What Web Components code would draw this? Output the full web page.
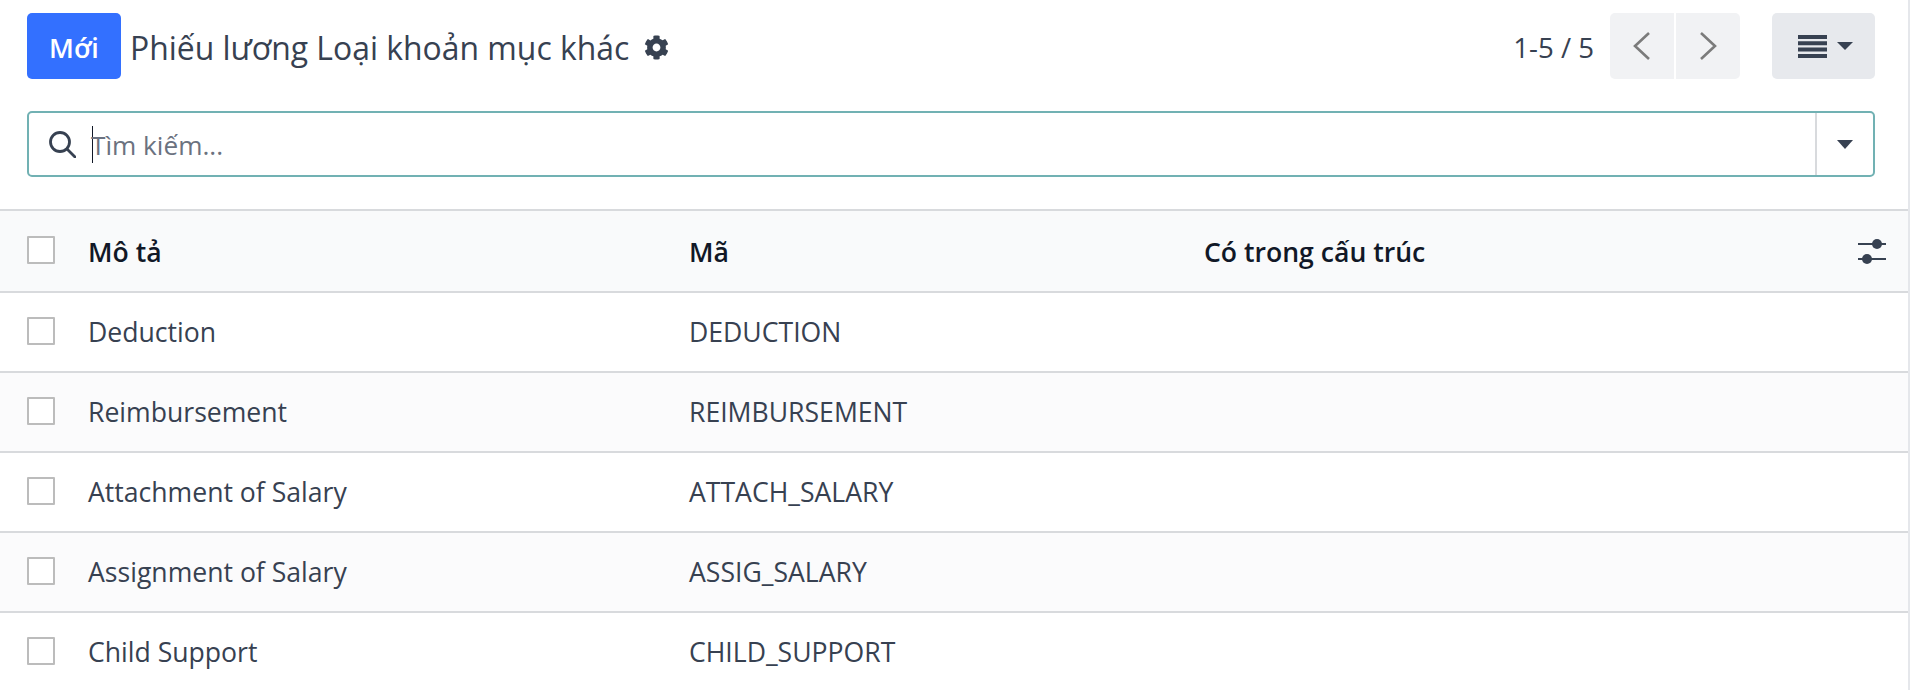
<!DOCTYPE html>
<html lang="vi">
<head>
<meta charset="utf-8">
<title>Phiếu lương Loại khoản mục khác</title>
<style>
    html, body { margin: 0; padding: 0; background: #fff; }
    body { font-family: "Open Sans", "Noto Sans", sans-serif; font-size: 26.6px; color: #374151; overflow: hidden; }
</style>
</head>
<body>
<app-page>
    <control-panel></control-panel>
    <search-bar></search-bar>
    <list-table>
        <list-row header name="Mô tả" code="Mã" extra="Có trong cấu trúc"></list-row>
        <list-row name="Deduction" code="DEDUCTION"></list-row>
        <list-row striped name="Reimbursement" code="REIMBURSEMENT"></list-row>
        <list-row name="Attachment of Salary" code="ATTACH_SALARY"></list-row>
        <list-row striped name="Assignment of Salary" code="ASSIG_SALARY"></list-row>
        <list-row name="Child Support" code="CHILD_SUPPORT"></list-row>
    </list-table>
</app-page>

<script>
class AppPage extends HTMLElement {
    constructor() {
        super();
        this.attachShadow({ mode: 'open' });
        this.shadowRoot.innerHTML = `
            <style>
                :host { display: block; width: 1908px; height: 690px; border-right: 2px solid #e5e7eb; box-sizing: content-box; overflow: hidden; }
            </style>
            <slot></slot>
        `;
    }
}

class ControlPanel extends HTMLElement {
    constructor() {
        super();
        this.attachShadow({ mode: 'open' });
        this.shadowRoot.innerHTML = `
            <style>
                :host { display: flex; align-items: stretch; height: 66px; padding: 13px 33px 0 27px; }
                button { font: inherit; border: 0; margin: 0; padding: 0; }
                .new { width: 94px; padding-top: 2px; border-radius: 5px; background: #3370ff; color: #fff; font-weight: 600; font-size: 27px; }
                .title { display: flex; align-items: center; margin-left: 9px; padding-top: 2px; font-size: 31.9px; color: #374151; white-space: nowrap; }
                .title svg { width: 25px; height: 25px; margin-left: 15px; fill: #374151; }
                .right { margin-left: auto; display: flex; align-items: stretch; }
                .count { align-self: center; padding-top: 2px; font-size: 27.6px; margin-right: 16px; }
                .pager { display: flex; gap: 2px; width: 130px; }
                .pager button { flex: 1; background: #f1f2f4; display: flex; align-items: center; justify-content: center; }
                .pager button:first-child { border-radius: 5px 0 0 5px; }
                .pager button:last-child { border-radius: 0 5px 5px 0; }
                .pager svg { width: 18px; height: 30px; fill: none; stroke: #7b7b7b; stroke-width: 2.6; }
                .view { margin-left: 32px; width: 103px; padding-left: 3px; box-sizing: border-box; border-radius: 5px; background: #e7e9ed; display: flex; align-items: center; justify-content: center; gap: 10px; }
                .view .bars { width: 29px; height: 23px; fill: #374151; }
                .view .caret { width: 16px; height: 8px; fill: #374151; }
            </style>
            <button class="new">Mới</button>
            <div class="title">Phiếu lương Loại khoản mục khác
                <svg viewBox="0 0 512 512"><path d="M487.4 315.7l-42.6-24.6c4.3-23.2 4.3-47 0-70.2l42.6-24.6c4.9-2.8 7.1-8.6 5.5-14-11.1-35.6-30-67.8-54.7-94.6-3.8-4.1-10-5.1-14.8-2.3L380.8 110c-17.9-15.4-38.5-27.3-60.8-35.1V25.8c0-5.6-3.9-10.5-9.4-11.7-36.7-8.2-74.3-7.8-109.2 0-5.5 1.2-9.4 6.1-9.4 11.7V75c-22.2 7.9-42.8 19.8-60.8 35.1L88.7 85.5c-4.9-2.8-11-1.9-14.8 2.3-24.7 26.7-43.6 58.9-54.7 94.6-1.7 5.4.6 11.2 5.5 14L67.3 221c-4.3 23.2-4.3 47 0 70.2l-42.6 24.6c-4.9 2.8-7.1 8.6-5.5 14 11.1 35.6 30 67.8 54.7 94.6 3.8 4.1 10 5.1 14.8 2.3l42.6-24.6c17.9 15.4 38.5 27.3 60.8 35.1v49.2c0 5.6 3.9 10.5 9.4 11.7 36.7 8.2 74.3 7.8 109.2 0 5.5-1.2 9.4-6.1 9.4-11.7v-49.2c22.2-7.9 42.8-19.8 60.8-35.1l42.6 24.6c4.9 2.8 11 1.9 14.8-2.3 24.7-26.7 43.6-58.9 54.7-94.6 1.5-5.5-.7-11.3-5.6-14.1zM256 336c-44.1 0-80-35.9-80-80s35.9-80 80-80 80 35.9 80 80-35.9 80-80 80z"/></svg>
            </div>
            <div class="right">
                <span class="count">1-5 / 5</span>
                <div class="pager">
                    <button><svg viewBox="0 0 18 30"><path d="M16 2 2 15l14 13"/></svg></button>
                    <button><svg viewBox="0 0 18 30"><path d="M2 2l14 13L2 28"/></svg></button>
                </div>
                <button class="view">
                    <svg class="bars" viewBox="0 0 29 23"><path d="M0 0h29v4H0zM0 6.300h29v4H0zM0 12.600h29v4H0zM0 19h29v4H0z"/></svg>
                    <svg class="caret" viewBox="0 0 16 8"><path d="M0 0h16L8 8z"/></svg>
                </button>
            </div>
        `;
    }
}

class SearchBar extends HTMLElement {
    constructor() {
        super();
        this.attachShadow({ mode: 'open' });
        this.shadowRoot.innerHTML = `
            <style>
                :host { display: block; padding: 32px 33px 32px 27px; }
                .box { display: flex; align-items: center; height: 62px; border: 2px solid #71b1b3; border-radius: 5px; }
                .glass { width: 28px; height: 28px; margin-left: 19px; fill: none; stroke: #374151; stroke-width: 2.8; stroke-linecap: round; }
                .caret-line { width: 1px; height: 37px; background: #111827; margin-left: 16px; }
                .placeholder { flex: 1; padding-top: 2px; font-size: 26.2px; color: #6b7280; margin-left: -2px; }
                .drop { align-self: stretch; width: 56px; border-left: 2px solid #d8dadd; display: flex; align-items: center; justify-content: center; }
                .drop svg { width: 16px; height: 9px; fill: #374151; }
            </style>
            <div class="box">
                <svg class="glass" viewBox="0 0 28 28"><circle cx="12" cy="12" r="9.500"/><path d="M19 19l8 8"/></svg>
                <span class="caret-line"></span>
                <span class="placeholder">Tìm kiếm...</span>
                <div class="drop"><svg viewBox="0 0 16 9"><path d="M0 0h16L8 9z"/></svg></div>
            </div>
        `;
    }
}

class ListTable extends HTMLElement {
    constructor() {
        super();
        this.attachShadow({ mode: 'open' });
        this.shadowRoot.innerHTML = `
            <style>
                :host { display: block; border-top: 2px solid #d8dadd; }
            </style>
            <slot></slot>
        `;
    }
}

class ListRow extends HTMLElement {
    constructor() {
        super();
        this.attachShadow({ mode: 'open' });
    }

    connectedCallback() {
        const sliders = `
            <svg class="sliders" viewBox="0 0 28 25">
                <path d="M0 5h28M0 20h28" stroke="#374151" stroke-width="2.200"/>
                <circle cx="19" cy="5" r="5" fill="#374151"/>
                <circle cx="9" cy="20" r="5" fill="#374151"/>
            </svg>`;
        this.shadowRoot.innerHTML = `
            <style>
                :host { display: grid; grid-template-columns: 88px 601px 515px 1fr; align-items: center; height: 78px; border-bottom: 2px solid #d8dadd; white-space: nowrap; line-height: 36px; }
                :host([header]) { background: #f9fafb; height: 80px; font-weight: 600; color: #111827; }
                :host([striped]) { background: #fbfbfc; }
                :host([header]) .name, :host([header]) .code, :host([header]) .extra { padding-top: 2px; }
                .check { width: 24px; height: 24px; margin-left: 27px; margin-bottom: 3px; border: 2px solid #bcbcbc; background: #fff; border-radius: 1px; }
                .last { display: flex; justify-content: space-between; align-items: center; padding-right: 22px; }
                .sliders { width: 28px; height: 25px; }
            </style>
            <div class="check"></div>
            <div class="name">${this.getAttribute('name')}</div>
            <div class="code">${this.getAttribute('code')}</div>
            <div class="last"><span class="extra">${this.getAttribute('extra') || ''}</span>${this.hasAttribute('header') ? sliders : ''}</div>
        `;
    }
}

customElements.define('app-page', AppPage);
customElements.define('control-panel', ControlPanel);
customElements.define('search-bar', SearchBar);
customElements.define('list-table', ListTable);
customElements.define('list-row', ListRow);
</script>
</body>
</html>
